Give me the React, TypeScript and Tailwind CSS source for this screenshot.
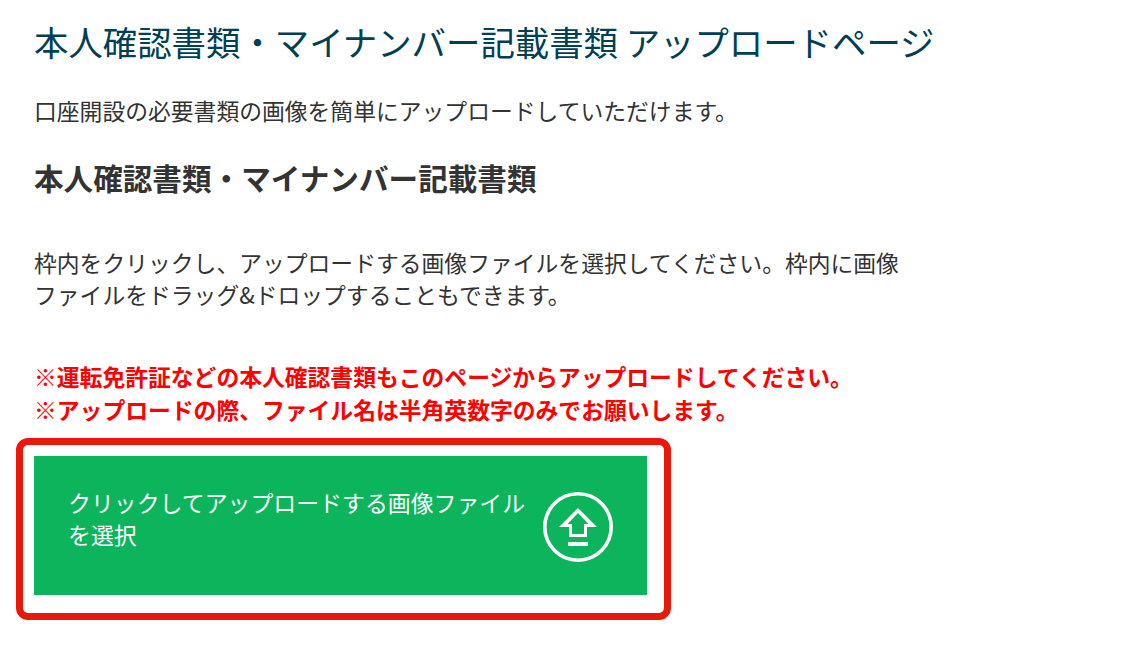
import React from 'react';

function UploadIcon() {
  return (
    <svg width="70" height="70" viewBox="0 0 70 70" fill="none" className="mt-[3px] shrink-0">
      <circle cx="35" cy="35" r="33.2" stroke="#fff" strokeWidth="3.6" />
      <path
        fill="#fff"
        fillRule="evenodd"
        d="M35 16 L54 35 H44 V45 H26 V35 H16 Z M35 21 L45.5 32 H41 V42 H29 V32 H24.5 Z"
      />
      <rect x="25" y="50" width="20" height="4" fill="#fff" />
    </svg>
  );
}

export default function App() {
  return (
    <div className="h-[648px] w-[1121px] overflow-hidden bg-white font-['Noto_Sans_CJK_JP',sans-serif]">
      <div className="pl-[34px] pt-[17px]">
        <h1 className="h-[48px] text-[34.4px] leading-[48px] font-normal whitespace-nowrap text-[#003f54]">
          本人確認書類・マイナンバー記載書類 アップロードページ
        </h1>
        <p className="mt-[30px] text-[22.8px] leading-[32px] text-[#333]">
          口座開設の必要書類の画像を簡単にアップロードしていただけます。
        </p>
        <h2 className="mt-[29px] text-[29.6px] leading-[44px] font-bold text-[#333]">
          本人確認書類・マイナンバー記載書類
        </h2>
        <p className="mt-[47px] w-[880px] text-[22.8px] leading-[32px] text-[#333]">
          枠内をクリックし、アップロードする画像ファイルを選択してください。枠内に画像ファイルをドラッグ&amp;ドロップすることもできます。
        </p>
        <p className="mt-[49px] text-[22.8px] leading-[33px] font-bold whitespace-nowrap text-[#ff0000]">
          ※運転免許証などの本人確認書類もこのページからアップロードしてください。
          <br />
          ※アップロードの際、ファイル名は半角英数字のみでお願いします。
        </p>
      </div>
      <div className="mt-[12px] ml-[16px] w-[655px] rounded-[12px] border-[7px] border-[#e8190c] px-[11px] pt-[11px] pb-[18px]">
        <div className="flex h-[139px] w-[613px] items-center justify-between bg-[#0cb45c] px-[34px] text-white">
          <p className="mb-[16px] w-[470px] text-[22.9px] leading-[32px]">クリックしてアップロードする画像ファイルを選択</p>
          <UploadIcon />
        </div>
      </div>
    </div>
  );
}
